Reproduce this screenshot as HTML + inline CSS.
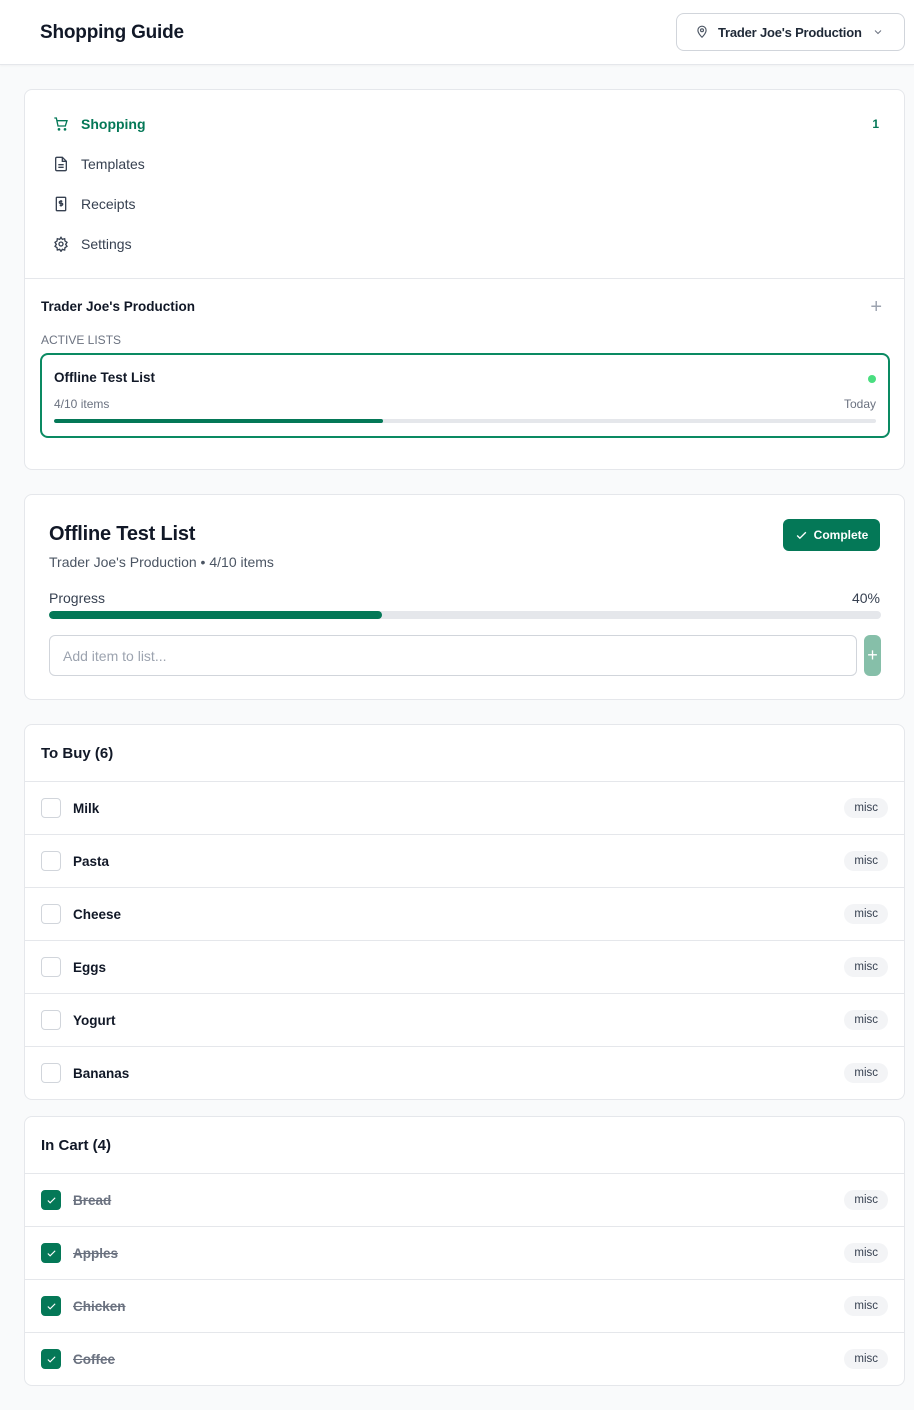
<!DOCTYPE html>
<html><head><meta charset="utf-8"><style>
*{box-sizing:border-box;margin:0;padding:0}
body{width:914px;height:1410px;background:#f9fafb;font-family:"Liberation Sans",sans-serif;color:#111827;position:relative;overflow:hidden}
.abs{position:absolute}
.hdr{left:0;top:0;width:914px;height:65px;background:#fff;border-bottom:1px solid #e5e7eb;box-shadow:0 1px 2px rgba(0,0,0,.04)}
.card{position:absolute;left:24px;width:881px;background:#fff;border:1px solid #e5e7eb;border-radius:8px}
.nav{position:absolute;left:28px;display:flex;align-items:center;font-size:14px;color:#374151}
.nav svg{margin-right:12px}
.bar{position:absolute;background:#e5e7eb;border-radius:4px;overflow:hidden}
.bar i{display:block;height:100%;background:#047857;border-radius:4px}
.row{position:absolute;left:0;width:879px;height:53px;border-top:1px solid #e5e7eb;display:flex;align-items:center;padding-left:16px}
.cb{width:20px;height:20px;border:1.5px solid #d1d5db;border-radius:4px;margin-right:12px;background:#fff}
.cb.on{background:#047857;border-color:#047857;display:flex;align-items:center;justify-content:center}
.nm{font-size:13.5px;font-weight:600;color:#111827}
.nm.done{text-decoration:line-through;color:#6b7280}
.pill{position:absolute;right:16px;top:16px;height:20px;padding:0 10px;border-radius:10px;background:#f3f4f6;font-size:11.5px;line-height:20px;color:#374151}
.sh{position:absolute;left:16px;top:20px;font-size:15px;font-weight:600}
</style></head><body>
<div class="abs hdr">
 <div class="abs" style="left:40px;top:22px;font-size:19px;font-weight:600;letter-spacing:-0.2px">Shopping Guide</div>
 <div class="abs" style="left:676px;top:13px;width:229px;height:38px;border:1px solid #d1d5db;border-radius:8px;display:flex;align-items:center;padding-left:18px;font-size:13px;font-weight:600;color:#1f2937">
  <svg width="14" height="14" viewBox="0 0 24 24" fill="none" stroke="#4b5563" stroke-width="2"><path d="M12 21s-7-6.5-7-12a7 7 0 0 1 14 0c0 5.5-7 12-7 12z"/><circle cx="12" cy="9" r="2.5"/></svg>
  <span style="margin-left:9px;letter-spacing:-0.2px">Trader Joe's Production</span>
  <svg style="margin-left:10px" width="12" height="12" viewBox="0 0 24 24" fill="none" stroke="#6b7280" stroke-width="2"><path d="M6 9l6 6 6-6"/></svg>
 </div>
</div>

<div class="card" style="top:89px;height:381px">
 <div class="nav" style="top:26px;color:#047857;font-weight:600;width:820px">
  <svg width="16" height="16" viewBox="0 0 24 24" fill="none" stroke="#047857" stroke-width="2"><path d="M2 3h3l2.5 12h11L21 7H6"/><circle cx="9" cy="20" r="1"/><circle cx="18" cy="20" r="1"/></svg>Shopping
  <span style="margin-left:auto;font-size:12px;margin-right:-6px">1</span></div>
 <div class="nav" style="top:66px"><svg width="16" height="16" viewBox="0 0 24 24" fill="none" stroke="#374151" stroke-width="2"><path d="M14 2H6a2 2 0 0 0-2 2v16a2 2 0 0 0 2 2h12a2 2 0 0 0 2-2V8z"/><path d="M14 2v6h6M8 13h8M8 17h8"/></svg>Templates</div>
 <div class="nav" style="top:106px"><svg width="16" height="16" viewBox="0 0 24 24" fill="none" stroke="#374151" stroke-width="2"><rect x="5" y="2" width="14" height="20" rx="1"/><path d="M14 8h-3a1.5 1.5 0 0 0 0 3h2a1.5 1.5 0 0 1 0 3h-3M12 6v10"/></svg>Receipts</div>
 <div class="nav" style="top:146px"><svg width="16" height="16" viewBox="0 0 24 24" fill="none" stroke="#374151" stroke-width="2"><circle cx="12" cy="12" r="3"/><path d="M12 2l2 3 3.5-1 .5 3.5 3 2-2 3 2 3-3 2-.5 3.5-3.5-1-2 3-2-3-3.5 1-.5-3.5-3-2 2-3-2-3 3-2 .5-3.5 3.5 1z"/></svg>Settings</div>
 <div class="abs" style="left:0;top:188px;width:879px;border-top:1px solid #e5e7eb"></div>
 <div class="abs" style="left:16px;top:209px;font-size:13.5px;font-weight:600">Trader Joe's Production</div>
 <div class="abs" style="right:22px;top:206px;font-size:20px;color:#9ca3af;font-weight:300">+</div>
 <div class="abs" style="left:16px;top:243px;font-size:12px;color:#6b7280">ACTIVE LISTS</div>
 <div class="abs" style="left:15px;top:263px;width:850px;height:85px;border:2px solid #0a8a62;border-radius:8px">
  <div class="abs" style="left:12px;top:15px;font-size:13.5px;font-weight:600">Offline Test List</div>
  <div class="abs" style="right:12px;top:20px;width:8px;height:8px;border-radius:50%;background:#4ade80"></div>
  <div class="abs" style="left:12px;top:42px;font-size:12px;color:#6b7280">4/10 items</div>
  <div class="abs" style="right:12px;top:42px;font-size:12px;color:#6b7280">Today</div>
  <div class="bar" style="left:12px;top:64px;width:822px;height:4px"><i style="width:40%"></i></div>
 </div>
</div>

<div class="card" style="top:494px;height:206px">
 <div class="abs" style="left:24px;top:28px;font-size:20px;font-weight:600;letter-spacing:-0.2px">Offline Test List</div>
 <div class="abs" style="left:24px;top:59px;font-size:14px;color:#4b5563">Trader Joe's Production • 4/10 items</div>
 <div class="abs" style="right:24px;top:24px;width:97px;height:32px;background:#047857;border-radius:6px;color:#fff;font-size:12px;font-weight:600;display:flex;align-items:center;justify-content:center"><svg width="13" height="13" viewBox="0 0 24 24" fill="none" stroke="#fff" stroke-width="2.5" style="margin-right:6px"><path d="M4 12l5 5L20 6"/></svg>Complete</div>
 <div class="abs" style="left:24px;top:95px;font-size:14px;color:#374151">Progress</div>
 <div class="abs" style="right:24px;top:95px;font-size:14px;color:#374151">40%</div>
 <div class="bar" style="left:24px;top:116px;width:832px;height:8px"><i style="width:40%"></i></div>
 <div class="abs" style="left:24px;top:140px;width:808px;height:41px;border:1px solid #d1d5db;border-radius:6px;font-size:14px;color:#9ca3af;padding:12px 13px">Add item to list...</div>
 <div class="abs" style="left:839px;top:140px;width:17px;height:41px;background:#86bfa9;border-radius:6px;color:#fff;font-size:18px;text-align:center;line-height:40px">+</div>
</div>

<div class="card" style="top:724px;height:376px">
 <div class="sh">To Buy (6)</div>
 <div class="row" style="top:56px"><div class="cb"></div><span class="nm">Milk</span><span class="pill">misc</span></div>
 <div class="row" style="top:109px"><div class="cb"></div><span class="nm">Pasta</span><span class="pill">misc</span></div>
 <div class="row" style="top:162px"><div class="cb"></div><span class="nm">Cheese</span><span class="pill">misc</span></div>
 <div class="row" style="top:215px"><div class="cb"></div><span class="nm">Eggs</span><span class="pill">misc</span></div>
 <div class="row" style="top:268px"><div class="cb"></div><span class="nm">Yogurt</span><span class="pill">misc</span></div>
 <div class="row" style="top:321px"><div class="cb"></div><span class="nm">Bananas</span><span class="pill">misc</span></div>
</div>

<div class="card" style="top:1116px;height:270px">
 <div class="sh">In Cart (4)</div>
 <div class="row" style="top:56px"><div class="cb on"><svg width="11" height="11" viewBox="0 0 24 24" fill="none" stroke="#fff" stroke-width="2.5"><path d="M4 12l5 5L20 6"/></svg></div><span class="nm done">Bread</span><span class="pill">misc</span></div>
 <div class="row" style="top:109px"><div class="cb on"><svg width="11" height="11" viewBox="0 0 24 24" fill="none" stroke="#fff" stroke-width="2.5"><path d="M4 12l5 5L20 6"/></svg></div><span class="nm done">Apples</span><span class="pill">misc</span></div>
 <div class="row" style="top:162px"><div class="cb on"><svg width="11" height="11" viewBox="0 0 24 24" fill="none" stroke="#fff" stroke-width="2.5"><path d="M4 12l5 5L20 6"/></svg></div><span class="nm done">Chicken</span><span class="pill">misc</span></div>
 <div class="row" style="top:215px"><div class="cb on"><svg width="11" height="11" viewBox="0 0 24 24" fill="none" stroke="#fff" stroke-width="2.5"><path d="M4 12l5 5L20 6"/></svg></div><span class="nm done">Coffee</span><span class="pill">misc</span></div>
</div>
</body></html>
